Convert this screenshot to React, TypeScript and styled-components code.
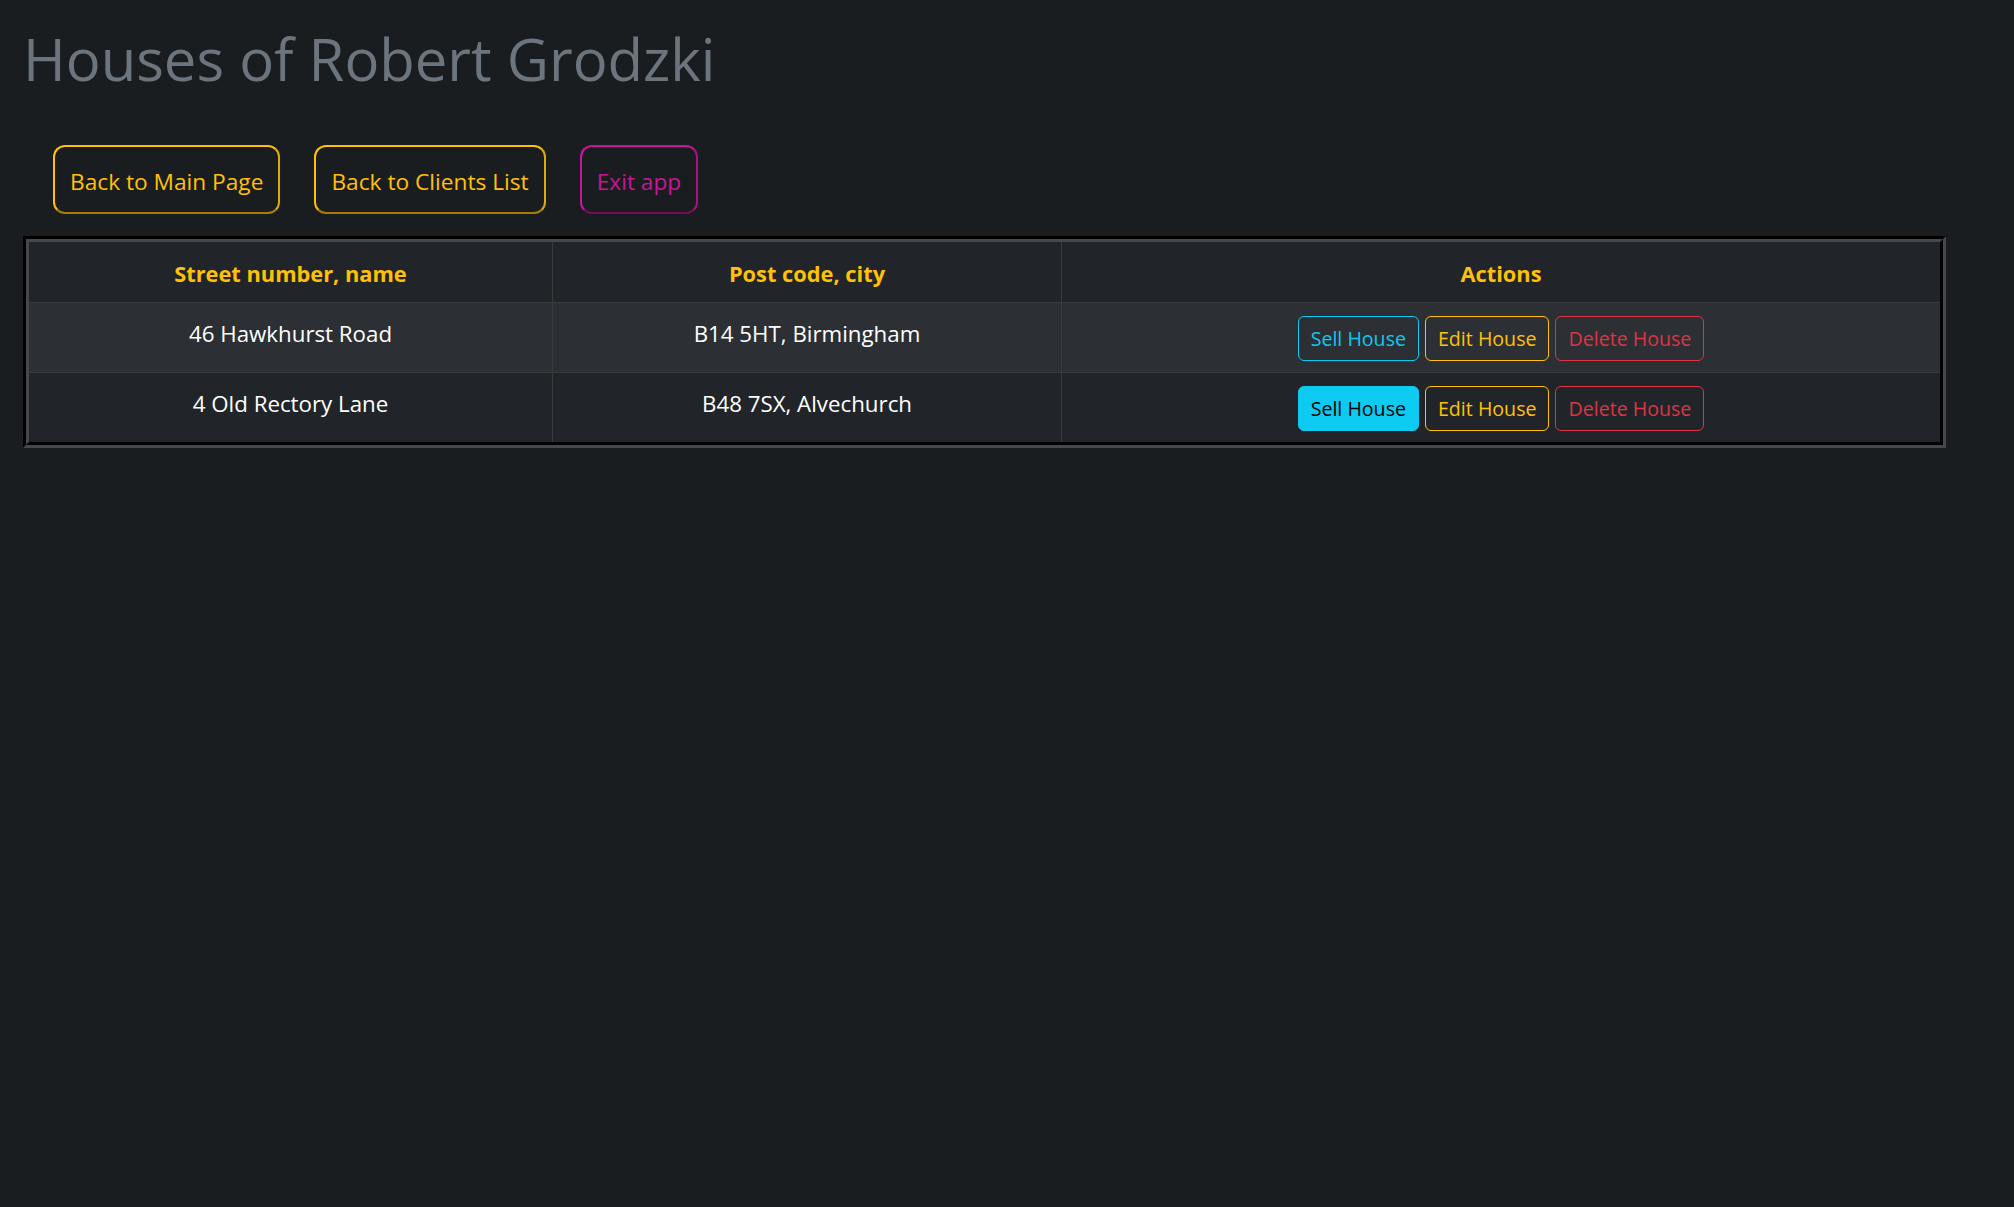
import React from "react";
import styled, { createGlobalStyle } from "styled-components";

const GlobalStyle = createGlobalStyle`
  html, body { margin: 0; padding: 0; background: #1a1d20; }
  body { font-family: "Open Sans", "Noto Sans", sans-serif; color: #fff; }
  * { box-sizing: border-box; }
`;

const Page = styled.div`
  min-height: 1207px;
  padding: 25px 68px 0 23px;
`;

const Title = styled.h1`
  margin: 0;
  font-size: 58px;
  font-weight: 500;
  line-height: 68px;
  color: #6c757d;
`;

const Toolbar = styled.div`
  display: flex;
  gap: 34px;
  margin: 52px 0 22px 30px;
`;

type Tone = { main: string; mid: string; dark: string };
const yellow: Tone = { main: "#ffc107", mid: "#e0a906", dark: "#a67d05" };
const magenta: Tone = { main: "#c8169b", mid: "#a91283", dark: "#740c5a" };

const NavButton = styled.button<{ $tone: Tone }>`
  height: 69px;
  padding: 3px 15px 0;
  background: transparent;
  border: 2px solid;
  border-color: ${(p) => `${p.$tone.main} ${p.$tone.mid} ${p.$tone.dark} ${p.$tone.main}`};
  border-radius: 12px;
  color: ${(p) => p.$tone.main};
  font-family: inherit;
  font-size: 22.7px;
  cursor: pointer;
`;

const Frame = styled.div`
  border: 3px solid;
  border-color: #000 #45494d #45494d #000;
`;

const Table = styled.table`
  width: 100%;
  border-collapse: separate;
  border-spacing: 0;
  border: 3px solid;
  border-color: #45494d #000 #000 #45494d;
  table-layout: fixed;
`;

const HeadCell = styled.th`
  height: 60px;
  padding: 2px 8px 0;
  background: #212529;
  color: #ffc107;
  font-size: 21.8px;
  font-weight: 700;
  text-align: center;
  & + & { border-left: 1px solid #373b3e; }
`;

const Row = styled.tr<{ $striped?: boolean }>`
  background: ${(p) => (p.$striped ? "#2c3034" : "#212529")};
`;

const Cell = styled.td<{ $actions?: boolean }>`
  height: 70px;
  padding: ${(p) => (p.$actions ? "1px 8px 0" : "0 8px 8px")};
  border-top: 1px solid #373b3e;
  text-align: center;
  vertical-align: middle;
  color: #fff;
  font-size: 22.3px;
  & + & { border-left: 1px solid #373b3e; }
`;

const Actions = styled.div`
  display: flex;
  justify-content: center;
  gap: 6px;
`;

const ActionButton = styled.button<{ $color: string; $solid?: boolean }>`
  height: 45px;
  padding: 0 12px;
  border: 1px solid ${(p) => p.$color};
  border-radius: 6px;
  background: ${(p) => (p.$solid ? p.$color : "transparent")};
  color: ${(p) => (p.$solid ? "#000" : p.$color)};
  font-family: inherit;
  font-size: 19.6px;
  cursor: pointer;
`;

const Col = styled.col<{ $w?: number }>`
  width: ${(p) => (p.$w ? `${p.$w}px` : "auto")};
`;

const houses = [
  { street: "46 Hawkhurst Road", city: "B14 5HT, Birmingham", sold: false },
  { street: "4 Old Rectory Lane", city: "B48 7SX, Alvechurch", sold: true },
];

export default function App() {
  return (
    <>
      <GlobalStyle />
      <Page>
        <Title>Houses of Robert Grodzki</Title>
        <Toolbar>
          <NavButton $tone={yellow}>Back to Main Page</NavButton>
          <NavButton $tone={yellow}>Back to Clients List</NavButton>
          <NavButton $tone={magenta}>Exit app</NavButton>
        </Toolbar>
        <Frame>
          <Table>
            <colgroup>
              <Col $w={523} />
              <Col $w={509} />
              <Col />
            </colgroup>
            <thead>
              <tr>
                <HeadCell>Street number, name</HeadCell>
                <HeadCell>Post code, city</HeadCell>
                <HeadCell>Actions</HeadCell>
              </tr>
            </thead>
            <tbody>
              {houses.map((h, i) => (
                <Row key={h.street} $striped={i % 2 === 0}>
                  <Cell>{h.street}</Cell>
                  <Cell>{h.city}</Cell>
                  <Cell $actions>
                    <Actions>
                      <ActionButton $color="#0dcaf0" $solid={h.sold}>Sell House</ActionButton>
                      <ActionButton $color="#ffc107">Edit House</ActionButton>
                      <ActionButton $color="#dc3545">Delete House</ActionButton>
                    </Actions>
                  </Cell>
                </Row>
              ))}
            </tbody>
          </Table>
        </Frame>
      </Page>
    </>
  );
}
